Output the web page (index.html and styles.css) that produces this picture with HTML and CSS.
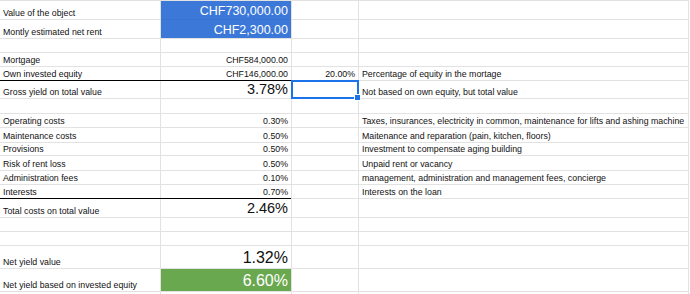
FILE: index.html
```html
<!DOCTYPE html>
<html lang="en">
<head>
    <meta charset="UTF-8">
    <title>yield</title>
    <link rel="stylesheet" href="styles.css">
</head>
<body>
    <div class="sheet">
        <div class="c">Value of the object</div>
        <div class="c r big blue join">CHF730,000.00</div>
        <div class="c"></div>
        <div class="c"></div>

        <div class="c">Montly estimated net rent</div>
        <div class="c r big blue">CHF2,300.00</div>
        <div class="c"></div>
        <div class="c"></div>

        <div class="c"></div><div class="c"></div><div class="c"></div><div class="c"></div>

        <div class="c">Mortgage</div>
        <div class="c r">CHF584,000.00</div>
        <div class="c"></div>
        <div class="c"></div>

        <div class="c rule">Own invested equity</div>
        <div class="c r rule rule-b">CHF146,000.00</div>
        <div class="c r">20.00%</div>
        <div class="c">Percentage of equity in the mortage</div>

        <div class="c">Gross yield on total value</div>
        <div class="c r mid">3.78%</div>
        <div class="c sel"></div>
        <div class="c">Not based on own equity, but total value</div>

        <div class="c"></div><div class="c"></div><div class="c"></div><div class="c"></div>

        <div class="c">Operating costs</div>
        <div class="c r">0.30%</div>
        <div class="c"></div>
        <div class="c">Taxes, insurances, electricity in common, maintenance for lifts and ashing machine</div>

        <div class="c">Maintenance costs</div>
        <div class="c r">0.50%</div>
        <div class="c"></div>
        <div class="c">Maitenance and reparation (pain, kitchen, floors)</div>

        <div class="c">Provisions</div>
        <div class="c r">0.50%</div>
        <div class="c"></div>
        <div class="c">Investment to compensate aging building</div>

        <div class="c">Risk of rent loss</div>
        <div class="c r">0.50%</div>
        <div class="c"></div>
        <div class="c">Unpaid rent or vacancy</div>

        <div class="c">Administration fees</div>
        <div class="c r">0.10%</div>
        <div class="c"></div>
        <div class="c">management, administration and management fees, concierge</div>

        <div class="c rule">Interests</div>
        <div class="c r rule rule-b">0.70%</div>
        <div class="c"></div>
        <div class="c">Interests on the loan</div>

        <div class="c">Total costs on total value</div>
        <div class="c r mid">2.46%</div>
        <div class="c"></div>
        <div class="c"></div>

        <div class="c"></div><div class="c"></div><div class="c"></div><div class="c"></div>
        <div class="c"></div><div class="c"></div><div class="c"></div><div class="c"></div>

        <div class="c">Net yield value</div>
        <div class="c r lg">1.32%</div>
        <div class="c"></div>
        <div class="c"></div>

        <div class="c">Net yield based on invested equity</div>
        <div class="c r lg green">6.60%</div>
        <div class="c"></div>
        <div class="c"></div>

        <div class="c"></div><div class="c"></div><div class="c"></div><div class="c"></div>
    </div>
</body>
</html>
```

FILE: styles.css
```css
*{
    margin: 0; padding: 0;
    box-sizing: border-box;
}
body{
    background: #fff;
    height: 294px;
    overflow: hidden;
    font-family: "Liberation Sans", Arial, sans-serif;
    font-size: 8.8px;
    color: #111;
}
.sheet{
    display: grid;
    grid-template-columns: 160px 130px 66px 329px;
    grid-template-rows: 18px 18px 13px 13px 13px 17px 14px 13px 14px 12px 14px 13px 13px 18px 13px 13px 22px 22px 2px;
    gap: 1px;
    padding: 1px 1px 0 0;
    width: fit-content;
    background: #e2e2e2;
}
.c{
    background: #fff;
    display: flex;
    align-items: flex-end;
    padding: 0 3px 1.5px;
    white-space: nowrap;
    line-height: normal;
}
.r{
    justify-content: flex-end;
}
.big{
    font-size: 12.5px;
}
.mid{
    font-size: 14.5px;
}
.lg{
    font-size: 16px;
}
.blue{
    background: #3c78d8;
    color: #fff;
}
.blue.join{
    box-shadow: 0 1px 0 #3a74d2;
}
.green{
    background: #6aa84f;
    color: #fff;
}
/* thick black line under a block of inputs */
.rule{
    position: relative;
}
.rule::after{
    content: "";
    position: absolute;
    left: 0;
    right: 0;
    bottom: -1px;
    height: 1px;
    background: #000;
}
.rule-b::after{
    left: -1px;
}
.sel{
    position: relative;
    outline: 2px solid #1a73e8;
    outline-offset: -1px;
}
.sel::after{
    content: "";
    position: absolute;
    right: -3px;
    bottom: -3px;
    width: 5px;
    height: 5px;
    background: #1a73e8;
    border: 1px solid #fff;
}
```
